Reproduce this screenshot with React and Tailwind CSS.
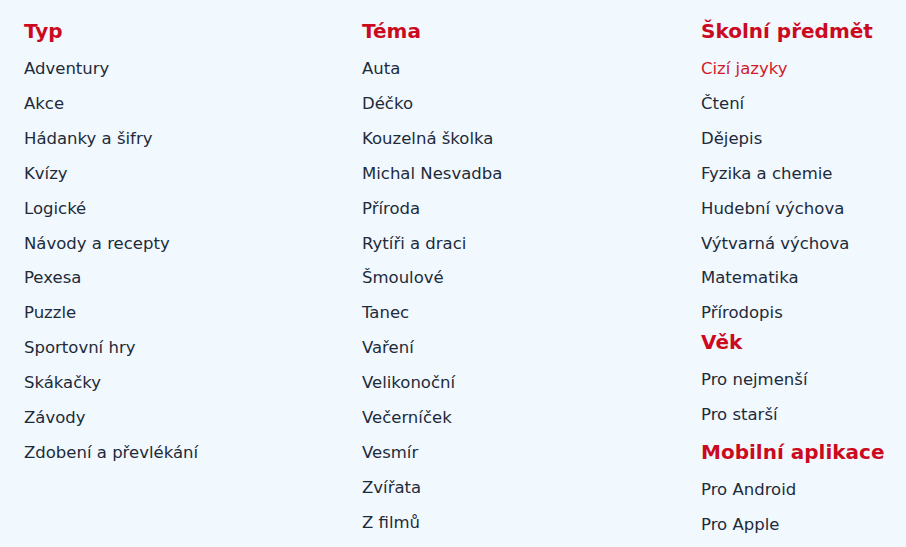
import React from "react";

const typ = [
  "Adventury",
  "Akce",
  "Hádanky a šifry",
  "Kvízy",
  "Logické",
  "Návody a recepty",
  "Pexesa",
  "Puzzle",
  "Sportovní hry",
  "Skákačky",
  "Závody",
  "Zdobení a převlékání",
];

const tema = [
  "Auta",
  "Déčko",
  "Kouzelná školka",
  "Michal Nesvadba",
  "Příroda",
  "Rytíři a draci",
  "Šmoulové",
  "Tanec",
  "Vaření",
  "Velikonoční",
  "Večerníček",
  "Vesmír",
  "Zvířata",
  "Z filmů",
];

const predmety = [
  "Cizí jazyky",
  "Čtení",
  "Dějepis",
  "Fyzika a chemie",
  "Hudební výchova",
  "Výtvarná výchova",
  "Matematika",
  "Přírodopis",
];

function Section({ title, items, active, className = "" }) {
  return (
    <div className={className}>
      <h2 className="text-[20px] leading-[23px] font-bold text-[#cc0a1e] mb-[9px]">
        {title}
      </h2>
      <ul>
        {items.map((item) => (
          <li key={item} className="leading-[34.9px] text-[16.5px]">
            <a
              href="#"
              className={item === active ? "text-[#d11a2a]" : "text-[#1d2b3a]"}
            >
              {item}
            </a>
          </li>
        ))}
      </ul>
    </div>
  );
}

export default function App() {
  return (
    <div
      className="min-h-screen bg-[#f1f8fe] pt-[20px] pl-6"
      style={{ fontFamily: "'DejaVu Sans', Verdana, sans-serif" }}
    >
      <div className="grid grid-cols-[338px_339px_1fr]">
        <Section title="Typ" items={typ} />
        <Section title="Téma" items={tema} />
        <div>
          <Section title="Školní předmět" items={predmety} active="Cizí jazyky" />
          <Section title="Věk" items={["Pro nejmenší", "Pro starší"]} />
          <Section
            title="Mobilní aplikace"
            items={["Pro Android", "Pro Apple"]}
            className="mt-[8px]"
          />
        </div>
      </div>
    </div>
  );
}
